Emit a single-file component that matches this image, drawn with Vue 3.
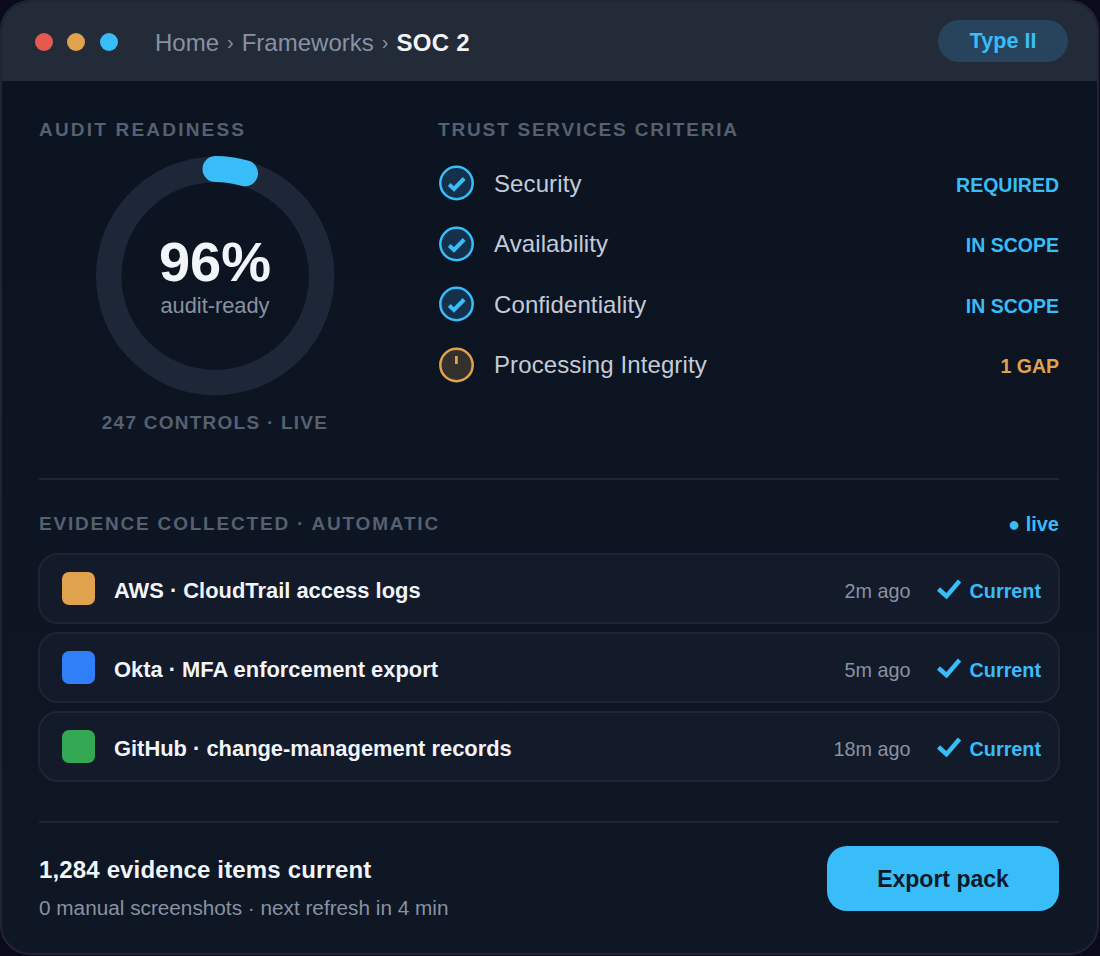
<script setup>
const criteria = [
  { name: 'Security', tag: 'REQUIRED', ok: true },
  { name: 'Availability', tag: 'IN SCOPE', ok: true },
  { name: 'Confidentiality', tag: 'IN SCOPE', ok: true },
  { name: 'Processing Integrity', tag: '1 GAP', ok: false },
]

const evidence = [
  { name: 'AWS · CloudTrail access logs', age: '2m ago', color: '#e0a24d' },
  { name: 'Okta · MFA enforcement export', age: '5m ago', color: '#2f7ff8' },
  { name: 'GitHub · change-management records', age: '18m ago', color: '#34a853' },
]
</script>

<template>
  <div class="window">
    <header class="titlebar">
      <div class="dots">
        <span class="dot red"></span>
        <span class="dot amber"></span>
        <span class="dot blue"></span>
      </div>
      <nav class="crumbs">
        <span>Home</span>
        <span class="sep">›</span>
        <span>Frameworks</span>
        <span class="sep">›</span>
        <strong>SOC 2</strong>
      </nav>
      <span class="pill">Type II</span>
    </header>

    <main class="content">
      <section class="top">
        <div class="readiness">
          <h2 class="label audit">AUDIT READINESS</h2>
          <div class="ring">
            <svg width="240" height="240" viewBox="0 0 240 240">
              <circle cx="120.2" cy="120" r="106.5" fill="none" stroke="#1e2737" stroke-width="25.5" />
              <path d="M120.5 13 A107 107 0 0 1 150 17.3" fill="none" stroke="#38bdf8" stroke-width="26" stroke-linecap="round" />
            </svg>
            <div class="ring-text">
              <div class="pct">96%</div>
              <div class="pct-sub">audit-ready</div>
            </div>
          </div>
          <div class="controls">247 CONTROLS · LIVE</div>
        </div>

        <div class="criteria">
          <h2 class="label">TRUST SERVICES CRITERIA</h2>
          <ul class="crit-list">
            <li v-for="c in criteria" :key="c.name" class="crit">
              <svg v-if="c.ok" class="crit-icon" width="36" height="36" viewBox="0 0 36 36">
                <circle cx="18.5" cy="18" r="16.2" fill="#14304a" stroke="#38bdf8" stroke-width="2.5" />
                <path d="M11.2 19.5 L16 24 L26.2 13.5" fill="none" stroke="#38bdf8" stroke-width="4" />
              </svg>
              <svg v-else class="crit-icon" width="36" height="36" viewBox="0 0 36 36">
                <circle cx="18.5" cy="18" r="16.2" fill="#33302e" stroke="#e0a24d" stroke-width="2.5" />
                <rect x="17" y="9" width="2.8" height="8" fill="#e0a24d" />
              </svg>
              <span class="crit-name">{{ c.name }}</span>
              <span class="crit-tag" :class="{ gap: !c.ok }">{{ c.tag }}</span>
            </li>
          </ul>
        </div>
      </section>

      <section class="evidence">
        <div class="ev-head">
          <h2 class="label">EVIDENCE COLLECTED · AUTOMATIC</h2>
          <span class="live">● live</span>
        </div>
        <div class="ev-list">
          <div v-for="e in evidence" :key="e.name" class="ev-row">
            <span class="swatch" :style="{ background: e.color }"></span>
            <span class="ev-name">{{ e.name }}</span>
            <span class="ev-age">{{ e.age }}</span>
            <svg class="ev-check" width="24" height="20" viewBox="0 0 24 20">
              <path d="M1.5 10 L9.5 17.2 L22.5 2" fill="none" stroke="#38bdf8" stroke-width="4.4" />
            </svg>
            <span class="ev-state">Current</span>
          </div>
        </div>
      </section>

      <footer class="foot">
        <div>
          <div class="foot-title">1,284 evidence items current</div>
          <div class="foot-sub">0 manual screenshots · next refresh in 4 min</div>
        </div>
        <button class="export">Export pack</button>
      </footer>
    </main>
  </div>
</template>

<style>
html,
body {
  margin: 0;
  background: #0b0a1c;
}
</style>

<style scoped>
.window {
  box-sizing: border-box;
  width: 1099px;
  height: 955px;
  border: 2px solid #1e2533;
  border-radius: 30px;
  overflow: hidden;
  display: flex;
  flex-direction: column;
  background: linear-gradient(180deg, #0b1320, #0f1624);
  font-family: 'Liberation Sans', Arial, sans-serif;
}

.titlebar {
  height: 79px;
  flex: none;
  display: flex;
  align-items: center;
  padding: 0 29px 0 33px;
  background: #232a38;
}

.dots {
  display: flex;
  gap: 14.25px;
}

.dot {
  width: 18px;
  height: 18px;
  border-radius: 50%;
}

.red { background: #e5594f; }
.amber { background: #e0a24d; }
.blue { background: #38bdf8; }

.crumbs {
  margin-left: 37.5px;
  padding-top: 2px;
  display: flex;
  align-items: center;
  gap: 8px;
  font-size: 24px;
  color: #8792a2;
}

.crumbs strong {
  color: #f1f5f9;
  letter-spacing: 0.3px;
}

.sep {
  font-size: 20px;
}

.pill {
  margin-left: auto;
  margin-bottom: 2px;
  width: 130px;
  height: 42px;
  display: flex;
  align-items: center;
  justify-content: center;
  border-radius: 21px;
  background: #27445c;
  color: #38bdf8;
  font-size: 21.6px;
  font-weight: 700;
}

.content {
  flex: 1;
  display: flex;
  flex-direction: column;
  padding: 0 38px 0 37px;
}

.top {
  display: flex;
  height: 399px;
  padding-top: 37px;
  box-sizing: border-box;
  border-bottom: 2px solid #1e2533;
}

.label {
  margin: 0;
  font-size: 19px;
  line-height: 24px;
  font-weight: 700;
  letter-spacing: 1.8px;
  color: #556070;
}

.label.audit {
  letter-spacing: 2.2px;
}

.readiness {
  width: 399px;
  flex: none;
}

.ring {
  position: relative;
  width: 240px;
  height: 240px;
  margin: 14px 0 0 56px;
}

.ring svg {
  display: block;
}

.ring-text {
  position: absolute;
  inset: 0;
  display: flex;
  flex-direction: column;
  align-items: center;
  justify-content: center;
}

.pct {
  font-size: 56px;
  line-height: 56px;
  font-weight: 700;
  color: #f1f5f9;
}

.pct-sub {
  margin-top: 4px;
  font-size: 21.8px;
  line-height: 24px;
  color: #8792a2;
}

.controls {
  width: 352px;
  margin-top: 15px;
  text-align: center;
  font-size: 19px;
  line-height: 24px;
  font-weight: 700;
  letter-spacing: 1.25px;
  color: #556070;
}

.criteria {
  flex: 1;
}

.crit-list {
  list-style: none;
  margin: 23px 0 0;
  padding: 0;
  display: flex;
  flex-direction: column;
  gap: 24.5px;
}

.crit {
  display: flex;
  align-items: center;
  height: 36px;
}

.crit-name {
  margin-left: 20px;
  padding-top: 1px;
  font-size: 24px;
  letter-spacing: 0.1px;
  color: #c3cbd8;
}

.crit-tag {
  margin-left: auto;
  padding-top: 4px;
  font-size: 19.5px;
  font-weight: 700;
  color: #38bdf8;
}

.crit-tag.gap {
  color: #e0a24d;
}

.evidence {
  padding-top: 32px;
}

.ev-head {
  display: flex;
  align-items: center;
  justify-content: space-between;
}

.live {
  font-size: 20px;
  font-weight: 700;
  color: #38bdf8;
}

.ev-list {
  margin-top: 17px;
  display: flex;
  flex-direction: column;
  gap: 8px;
}

.ev-row {
  box-sizing: border-box;
  height: 71px;
  margin-left: -1px;
  margin-right: -1px;
  display: flex;
  align-items: center;
  padding: 0 17px 0 22px;
  border: 2px solid #1e2533;
  border-radius: 20px;
  background: #131a2a;
}

.swatch {
  width: 33px;
  height: 33px;
  border-radius: 7px;
}

.ev-name {
  margin-left: 19px;
  padding-top: 5px;
  font-size: 21.9px;
  font-weight: 700;
  color: #f1f5f9;
}

.ev-age {
  margin-left: auto;
  padding-top: 6px;
  font-size: 19.8px;
  color: #8792a2;
}

.ev-check {
  margin-left: 26px;
}

.ev-state {
  margin-left: 9px;
  padding-top: 6px;
  font-size: 19.8px;
  font-weight: 700;
  color: #38bdf8;
}

.foot {
  margin-top: 39px;
  padding-top: 23px;
  border-top: 2px solid #1e2533;
  display: flex;
  align-items: flex-start;
  justify-content: space-between;
}

.foot-title {
  margin-top: 10px;
  font-size: 24px;
  line-height: 28px;
  font-weight: 700;
  letter-spacing: 0.15px;
  color: #f1f5f9;
}

.foot-sub {
  margin-top: 12px;
  font-size: 20.75px;
  line-height: 24px;
  color: #8792a2;
}

.export {
  width: 232px;
  height: 65px;
  padding: 2px 0 0;
  border: 0;
  border-radius: 20px;
  background: #38bdf8;
  color: #0b1a2b;
  font-family: inherit;
  font-size: 23px;
  font-weight: 700;
}
</style>
